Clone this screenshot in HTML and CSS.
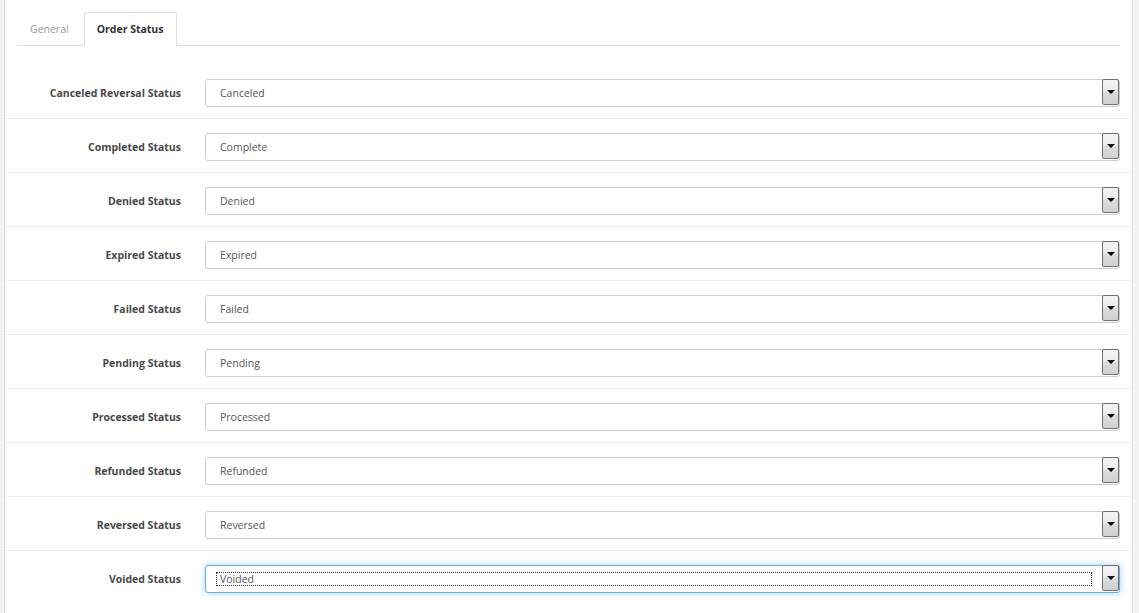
FILE: index.html
```html
<!DOCTYPE html>
<html>
<head>
<meta charset="utf-8">
<link rel="stylesheet" href="styles.css">
</head>
<body>
<div class="panel">
  <ul class="tabs">
    <li class="tab">General</li>
    <li class="tab active">Order Status</li>
  </ul>
  <div class="tab-content">
    <div class="row"><label class="label">Canceled Reversal Status</label><div class="select"><span class="value">Canceled</span><span class="arrow"></span></div></div>
    <div class="row"><label class="label">Completed Status</label><div class="select"><span class="value">Complete</span><span class="arrow"></span></div></div>
    <div class="row"><label class="label">Denied Status</label><div class="select"><span class="value">Denied</span><span class="arrow"></span></div></div>
    <div class="row"><label class="label">Expired Status</label><div class="select"><span class="value">Expired</span><span class="arrow"></span></div></div>
    <div class="row"><label class="label">Failed Status</label><div class="select"><span class="value">Failed</span><span class="arrow"></span></div></div>
    <div class="row"><label class="label">Pending Status</label><div class="select"><span class="value">Pending</span><span class="arrow"></span></div></div>
    <div class="row"><label class="label">Processed Status</label><div class="select"><span class="value">Processed</span><span class="arrow"></span></div></div>
    <div class="row"><label class="label">Refunded Status</label><div class="select"><span class="value">Refunded</span><span class="arrow"></span></div></div>
    <div class="row"><label class="label">Reversed Status</label><div class="select"><span class="value">Reversed</span><span class="arrow"></span></div></div>
    <div class="row"><label class="label">Voided Status</label><div class="select focused"><span class="value">Voided</span><span class="arrow"></span></div></div>
  </div>
</div>
</body>
</html>
```

FILE: styles.css
```css
html, body {
  margin: 0;
  padding: 0;
  background: #f3f3f3;
  font-family: "Open Sans", "DejaVu Sans", sans-serif;
  font-size: 10.5px;
  color: #555;
}
.panel {
  margin-left: 4px;
  width: 1127px;
  min-height: 660px;
  background: #fff;
  border-left: 1px solid #dcdcdc;
  border-right: 1px solid #dcdcdc;
  padding-top: 12px;
}
.tabs {
  list-style: none;
  margin: 0 12px;
  padding: 0;
  display: flex;
  border-bottom: 1px solid #ddd;
  height: 33px;
}
.tab {
  height: 33px;
  line-height: 33px;
  padding: 0 12px;
  margin-right: 2px;
  color: #999;
  box-sizing: border-box;
  border: 1px solid transparent;
  border-bottom: none;
  border-radius: 2px 2px 0 0;
}
.tab.active {
  color: #333;
  font-weight: 700;
  background: #fff;
  border-color: #ddd;
  height: 34px;
}
.tab-content {
  padding-top: 20px;
}
.row {
  display: grid;
  grid-template-columns: 176px 1fr;
  column-gap: 24px;
  align-items: center;
  padding: 13px 12px 11px 0;
}
.row + .row {
  border-top: 1px solid #ededed;
  padding-top: 14px;
}
.label {
  text-align: right;
  font-weight: 700;
  color: #484848;
  line-height: 14px;
  padding-bottom: 1px;
}
.select {
  position: relative;
  height: 28px;
  box-sizing: border-box;
  border: 1px solid #ccc;
  border-radius: 3px;
  padding-left: 14px;
  display: flex;
  align-items: center;
  color: #555;
  background: #fff;
}
.arrow {
  position: absolute;
  top: -1px;
  right: 0;
  width: 17px;
  height: 26px;
  box-sizing: border-box;
  border: 1px solid #707070;
  border-radius: 2px;
  background: linear-gradient(#f3f3f3 0%, #ececec 45%, #dcdcdc 50%, #d0d0d0 100%);
}
.arrow::after {
  content: "";
  position: absolute;
  left: 3.5px;
  top: 10px;
  border-left: 4px solid transparent;
  border-right: 4px solid transparent;
  border-top: 4px solid #000;
}
.select.focused {
  border-color: #66afe9;
  box-shadow: 0 0 6px rgba(102, 175, 233, 0.6);
  padding-left: 10px;
}
.select.focused .value {
  flex: 1;
  margin-right: 27px;
  border: 1px dotted #333;
  padding: 0 0 0 3px;
  height: 14px;
  line-height: 12px;
  box-sizing: border-box;
}
```
